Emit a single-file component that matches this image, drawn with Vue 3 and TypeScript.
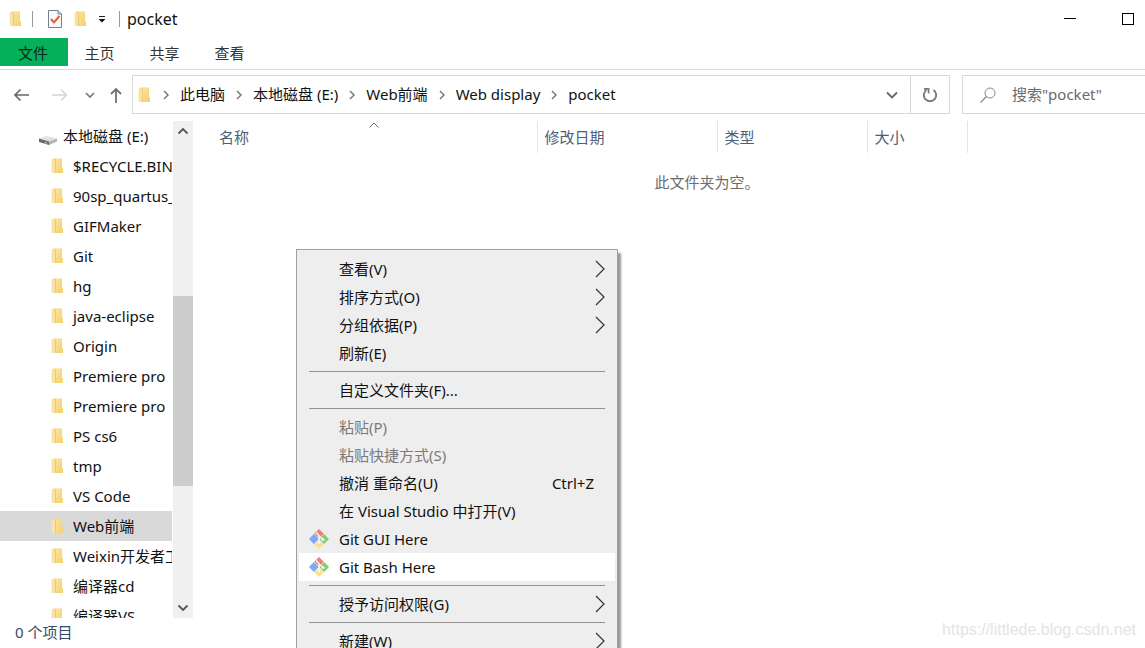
<script setup lang="ts">
import { ref } from 'vue'

interface MenuEntry {
  label?: string
  separator?: boolean
  submenu?: boolean
  disabled?: boolean
  shortcut?: string
  git?: boolean
  active?: boolean
}

const tabs = ['主页', '共享', '查看']
const crumbs = ['此电脑', '本地磁盘 (E:)', 'Web前端', 'Web display', 'pocket']
const folders = [
  '$RECYCLE.BIN', '90sp_quartus_', 'GIFMaker', 'Git', 'hg', 'java-eclipse', 'Origin',
  'Premiere pro', 'Premiere pro', 'PS cs6', 'tmp', 'VS Code', 'Web前端',
  'Weixin开发者工', '编译器cd', '编译器VS',
]
const selected = ref('Web前端')
const query = ref('')
const scroll = { before: 155, thumb: 190, after: 112 }

const menu: MenuEntry[] = [
  { label: '查看(V)', submenu: true },
  { label: '排序方式(O)', submenu: true },
  { label: '分组依据(P)', submenu: true },
  { label: '刷新(E)' },
  { separator: true },
  { label: '自定义文件夹(F)...' },
  { separator: true },
  { label: '粘贴(P)', disabled: true },
  { label: '粘贴快捷方式(S)', disabled: true },
  { label: '撤消 重命名(U)', shortcut: 'Ctrl+Z' },
  { label: '在 Visual Studio 中打开(V)' },
  { label: 'Git GUI Here', git: true },
  { label: 'Git Bash Here', git: true, active: true },
  { separator: true },
  { label: '授予访问权限(G)', submenu: true },
  { separator: true },
  { label: '新建(W)', submenu: true },
]
</script>

<template>
  <div class="window">
    <svg class="defs" aria-hidden="true">
      <defs>
        <linearGradient id="folderFront" x1="0" y1="0" x2="1" y2="1">
          <stop offset="0" stop-color="#fbe39c" />
          <stop offset="1" stop-color="#f5d06c" />
        </linearGradient>
        <symbol id="folder" viewBox="0 0 12 16">
          <path d="M2 0.5H11V10L12 10.5V15H2Z" fill="#f5d57c" />
          <path d="M5 1H10.5V10L12 11V15L5 13.5Z" fill="url(#folderFront)" />
          <path d="M0.5 1L4 2.5V15.5L0.5 14.5Z" fill="#f9e3a2" />
          <path d="M4 2.5L5 3V13L4 15.5Z" fill="#e9c77a" />
        </symbol>
        <symbol id="git" viewBox="0 0 20 20">
          <path d="M10 0L14.8 4.8L10 9.6L5.2 4.8Z" fill="#f27b80" />
          <path d="M4.9 5.1L9.8 10L4.9 14.9L0 10Z" fill="#79aaf6" />
          <path d="M15.1 5.1L20 10L15.1 14.9L10.2 10Z" fill="#83cc68" />
          <path d="M10 10.4L14.8 15.2L10 20L5.2 15.2Z" fill="#fbe28a" />
          <path d="M7 3.5L10 6.5V13.5M10 7L14 10.5" fill="none" stroke="#f4f4f0" stroke-width="1.6" />
          <circle cx="10" cy="13.5" r="1.6" fill="#f4f4f0" />
          <circle cx="14" cy="10.5" r="1.6" fill="#f4f4f0" />
        </symbol>
      </defs>
    </svg>

    <header class="titlebar">
      <svg class="folder"><use href="#folder" /></svg>
      <span class="rule first"></span>
      <button class="quick check" aria-label="属性">
        <svg width="16" height="18" viewBox="0 0 16 18">
          <path d="M1.5 0.5H11L14.5 4V17.5H1.5Z" fill="#fafbfd" stroke="#77808c" />
          <path d="M11 0.5V4H14.5" fill="none" stroke="#77808c" />
          <path d="M4 9L7 12.5L12.5 6" fill="none" stroke="#e2612e" stroke-width="2" />
        </svg>
      </button>
      <button class="quick" aria-label="新建文件夹"><svg class="folder"><use href="#folder" /></svg></button>
      <button class="quick drop" aria-label="自定义快速访问工具栏">
        <svg width="8" height="8" viewBox="0 0 8 8"><path d="M1 1.5H7" stroke="#222" /><path d="M0.5 4H7.5L4 7.5Z" fill="#111" /></svg>
      </button>
      <span class="rule"></span>
      <span class="title">pocket</span>
      <span class="window-buttons">
        <button aria-label="最小化"><svg width="12" height="12"><path d="M0 5.5H12" stroke="#000" /></svg></button>
        <button aria-label="最大化"><svg width="12" height="12"><rect x="0.5" y="0.5" width="11" height="11" fill="none" stroke="#000" /></svg></button>
      </span>
    </header>

    <nav class="tabs">
      <button class="file">文件</button>
      <button v-for="t in tabs" :key="t">{{ t }}</button>
    </nav>

    <div class="navigation">
      <div class="arrows">
        <button aria-label="后退"><svg width="16" height="16" viewBox="0 0 16 16"><path d="M1 8H15M6.5 2.5L1 8L6.5 13.5" stroke="#666" stroke-width="1.6" /></svg></button>
        <button aria-label="前进" disabled><svg width="16" height="16" viewBox="0 0 16 16"><path d="M0 8H14.5M9 2.5L14.5 8L9 13.5" stroke="#d4d4d4" stroke-width="1.4" /></svg></button>
        <button aria-label="最近浏览的位置"><svg width="10" height="8" viewBox="0 0 10 8"><path d="M1 2L5 6L9 2" stroke="#777" stroke-width="1.6" /></svg></button>
        <button aria-label="向上"><svg width="14" height="16" viewBox="0 0 14 16"><path d="M7 2V16M2 7L7 2L12 7" stroke="#707070" stroke-width="1.8" /></svg></button>
      </div>
      <div class="address">
        <svg class="folder"><use href="#folder" /></svg>
        <template v-for="c in crumbs" :key="c">
          <svg class="chevron" width="6" height="10" viewBox="0 0 6 10"><path d="M1 1L5 5L1 9" /></svg>
          <button class="crumb">{{ c }}</button>
        </template>
        <button class="history" aria-label="以前的位置"><svg width="12" height="8" viewBox="0 0 12 8"><path d="M1 1.5L6 6.5L11 1.5" stroke="#666" stroke-width="1.8" /></svg></button>
        <button class="refresh" aria-label="刷新">
          <svg width="16" height="16" viewBox="0 0 16 16"><path d="M11.5 3A6.2 6.2 0 1 1 4.5 3" stroke="#777" stroke-width="1.9" /><path d="M2 1.9H6.6V6.5" stroke="#777" stroke-width="1.6" /></svg>
        </button>
      </div>
      <label class="search">
        <svg width="16" height="16" viewBox="0 0 16 16"><circle cx="10" cy="6" r="5" stroke="#8a8a8a" /><path d="M6.5 9.5L0.5 15.5" stroke="#8a8a8a" stroke-width="1.2" /></svg>
        <input v-model="query" type="text" aria-label="搜索" placeholder='搜索"pocket"' />
      </label>
    </div>

    <main class="content">
      <aside class="sidebar">
        <div class="tree">
          <button class="node drive">
            <svg width="20" height="12" viewBox="0 0 20 12"><path d="M1 4.5L8 2L19 4.5L11 7.5Z" fill="#e2e2e2" /><path d="M1 4.5L11 7.5V11L1 8Z" fill="#6a6a6a" /><path d="M11 7.5L19 4.5V7.5L11 11Z" fill="#b4b4b4" /><path d="M7 8.5L9 9.1" stroke="#c8f0c8" /></svg>
            本地磁盘 (E:)
          </button>
          <button v-for="(f, i) in folders" :key="i" class="node" :class="{ selected: f === selected }" @click="selected = f">
            <svg class="folder"><use href="#folder" /></svg>{{ f }}
          </button>
        </div>
        <div class="scrollbar">
          <button aria-label="向上滚动"><svg width="12" height="8" viewBox="0 0 12 8"><path d="M1.5 6.5L6 2L10.5 6.5" stroke="#555" stroke-width="1.8" /></svg></button>
          <span :style="{ flexGrow: scroll.before }"></span>
          <span class="thumb" :style="{ flexGrow: scroll.thumb }"></span>
          <span :style="{ flexGrow: scroll.after }"></span>
          <button aria-label="向下滚动"><svg width="12" height="8" viewBox="0 0 12 8"><path d="M1.5 1.5L6 6L10.5 1.5" stroke="#555" stroke-width="1.8" /></svg></button>
        </div>
      </aside>

      <section class="files">
        <table>
          <thead>
            <tr>
              <th class="name">名称<svg class="sort" width="10" height="6" viewBox="0 0 10 6"><path d="M0.5 5.5L5 1L9.5 5.5" stroke="#666" /></svg></th>
              <th class="date">修改日期</th>
              <th class="type">类型</th>
              <th class="size">大小</th>
            </tr>
          </thead>
        </table>
        <p class="empty">此文件夹为空。</p>
      </section>
    </main>

    <footer class="status">0 个项目</footer>

    <div class="menu" role="menu">
      <template v-for="(m, i) in menu" :key="i">
        <hr v-if="m.separator" />
        <button v-else role="menuitem" :disabled="m.disabled" :class="{ active: m.active }">
          <span class="icon"><svg v-if="m.git" width="20" height="20"><use href="#git" /></svg></span>
          <span class="label">{{ m.label }}</span>
          <kbd v-if="m.shortcut">{{ m.shortcut }}</kbd>
          <svg v-if="m.submenu" width="10" height="18" viewBox="0 0 10 18"><path d="M1 1L9 9L1 17" stroke="#333" stroke-width="1.2" /></svg>
        </button>
      </template>
    </div>

    <span class="watermark">https://littlede.blog.csdn.net</span>
  </div>
</template>

<style>
body {
  margin: 0;
  overflow: hidden;
}
</style>

<style scoped>
.window {
  position: relative;
  display: flex;
  flex-direction: column;
  height: 100vh;
  overflow: hidden;
  background: #fff;
  color: #111;
  font: 15px/20px "Noto Sans", "Noto Sans CJK SC", sans-serif;
}
.window * { box-sizing: border-box; }
button {
  display: flex;
  align-items: center;
  margin: 0;
  padding: 0;
  border: 0;
  background: none;
  color: inherit;
  font: inherit;
  white-space: nowrap;
}
svg { flex: none; fill: none; }
.defs { position: absolute; width: 0; height: 0; }
.folder { width: 12px; height: 16px; }

.titlebar {
  flex: none;
  display: flex;
  align-items: center;
  height: 38px;
  padding-left: 9px;
}
.rule { width: 1px; height: 16px; background: #999; }
.rule.first { margin-left: 11px; }
.check { margin: 0 11px 0 14px; }
.drop { margin: 0 13px 0 12px; }
.title { margin-left: 7px; font-size: 16px; }
.window-buttons {
  display: flex;
  gap: 46px;
  margin-left: auto;
  padding-right: 11px;
}

.tabs {
  flex: none;
  display: flex;
  height: 32px;
  padding-bottom: 3px;
  border-bottom: 1px solid #d8dadc;
  color: #333;
}
.tabs button { justify-content: center; width: 65px; padding: 2px 2px 0 0; }
.tabs .file { width: 68px; background: #06b05a; color: #06281a; }

.navigation {
  flex: none;
  display: flex;
  height: 51px;
  padding: 5px 0 7px;
}
.arrows {
  display: flex;
  gap: 17px;
  width: 132px;
  padding-left: 14px;
}
.arrows button:nth-child(2) { margin-left: 5px; }
.arrows button:nth-child(4) { margin-left: -3px; }
.address {
  flex: 1;
  display: flex;
  align-items: center;
  gap: 11px;
  min-width: 0;
  margin-right: 12px;
  padding-left: 5px;
  border: 1px solid #d5d9d9;
}
.address .folder { margin-right: 2px; }
.crumb { padding-bottom: 2px; }
.chevron { stroke: #777; stroke-width: 1.5; }
.history { margin: 0 1px 0 auto; }
.refresh {
  justify-content: center;
  align-self: stretch;
  width: 39px;
  border-left: 1px solid #d5d9d9;
}
.search {
  display: flex;
  align-items: center;
  gap: 16px;
  width: 183px;
  padding-left: 17px;
  border: 1px solid #d5d9d9;
  border-right: 0;
}
.search input {
  width: 100%;
  min-width: 0;
  padding: 0 0 2px;
  border: 0;
  outline: 0;
  background: none;
  font: inherit;
}
.search input::placeholder { color: #6a6a6a; opacity: 1; }

.content { flex: 1; display: flex; min-height: 0; }
.sidebar { flex: none; display: flex; width: 193px; }
.tree { flex: 1; min-width: 0; overflow: hidden; padding-right: 1px; }
.node {
  gap: 10px;
  width: 100%;
  height: 30px;
  padding-left: 51px;
  overflow: hidden;
}
.node.drive { gap: 5px; padding-left: 38px; }
.node.drive svg { margin-top: 8px; }
.node.selected { background: #d9d9d9; }
.scrollbar {
  flex: none;
  display: flex;
  flex-direction: column;
  width: 20px;
  background: #f0f0f0;
}
.scrollbar button { justify-content: center; height: 20px; }
.thumb { background: #cdcdcd; }

.files { flex: 1; min-width: 0; padding-left: 18px; }
table { table-layout: fixed; width: 757px; border-collapse: collapse; }
th {
  position: relative;
  height: 32px;
  padding: 0 0 0 7px;
  border-right: 1px solid #e3e5e8;
  color: #4c607a;
  font-weight: 400;
  text-align: left;
}
.name { width: 326px; padding-left: 8px; }
.date { width: 180px; }
.type { width: 150px; }
.sort { position: absolute; top: 1px; left: 50%; margin-left: -5px; }
.empty { margin: 19px 0; padding-left: 58px; color: #6d6d6d; text-align: center; }

.status { flex: none; height: 30px; padding: 4px 15px; color: #364a66; }

.menu {
  position: absolute;
  top: 249px;
  left: 296px;
  width: 322px;
  padding: 5px 2px;
  border: 1px solid #a0a0a0;
  background: #eee;
  box-shadow: 3px 4px 2px #999;
}
.menu button { width: 100%; height: 28px; padding-right: 10px; }
.menu button:disabled { color: #7a7a7a; }
.menu .active { background: #fff; }
.menu .icon { display: flex; width: 40px; padding-left: 10px; }
.menu .label { flex: 1; text-align: left; }
.menu kbd { padding-right: 11px; font: inherit; }
.menu hr {
  height: 1px;
  margin: 4px 10px;
  border: 0;
  background: #919191;
}

.watermark {
  position: absolute;
  right: 9px;
  bottom: 8px;
  color: #e4e4e4;
  font: 16px/20px "Liberation Sans", sans-serif;
}
</style>
